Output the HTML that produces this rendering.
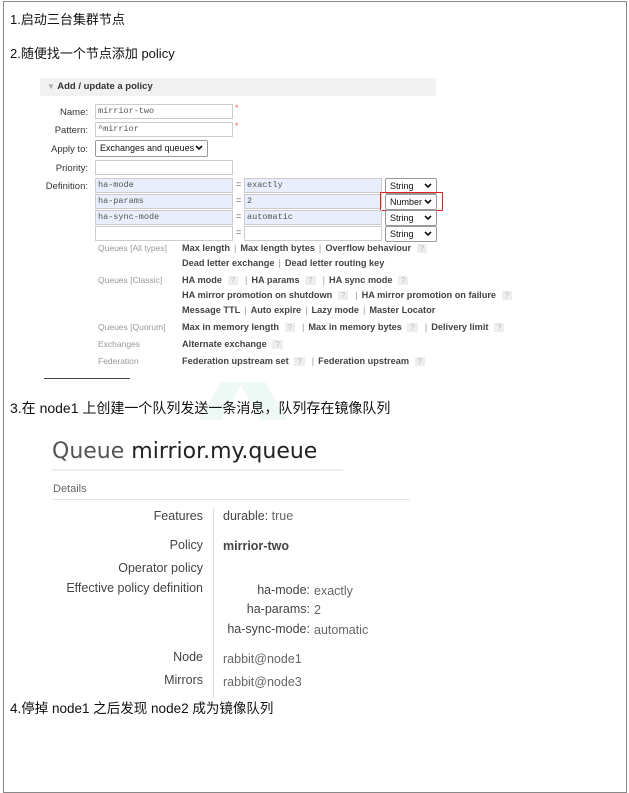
<!DOCTYPE html>
<html><head><meta charset="utf-8"><style>
body{margin:0;width:629px;height:744px;background:#fff;position:relative;overflow:hidden;font-family:"Liberation Sans","Noto Sans CJK SC",sans-serif;}
.a{position:absolute;white-space:nowrap;}
.cn{font-size:14px;color:#111;}
.lbl{font-size:9.5px;color:#333;text-align:right;width:80px;}
.inp{position:absolute;height:15px;border:1px solid #ccc;background:#fff;box-sizing:border-box;font-family:"Liberation Mono",monospace;font-size:8.5px;color:#555;padding-left:2px;line-height:13px;}
.blue{background:#e9eefc;}
.sel{position:absolute;height:16px;border:1px solid #999;border-radius:2px;background:#fff;box-sizing:border-box;font-size:9px;color:#111;padding-left:4px;line-height:14px;}
.sel svg{position:absolute;right:4px;top:4px;}
.g{font-size:8.5px;color:#999;}
.l{font-size:9.2px;color:#444;font-weight:bold;}
.q{display:inline-block;background:#eee;color:#bbb;font-size:8px;padding:0 3px;margin:0 3px;font-weight:normal;}
.s{color:#999;font-weight:normal;margin:0 4px;}
.dl{font-size:12.5px;color:#444;text-align:right;width:170px;}
.dv{font-size:12.5px;color:#666;}
</style></head><body>
<div class="a" style="left:3px;top:1px;width:622px;height:790px;border:1px solid #888;"></div>
<div class="a cn" style="left:10px;top:9px;font-size:13px;">1.启动三台集群节点</div>
<div class="a cn" style="left:10px;top:43px;font-size:13px;">2.随便找一个节点添加 policy</div>

<div class="a" style="left:40px;top:78px;width:396px;height:18px;background:#f1f1f1;"></div>
<div class="a" style="left:47px;top:81px;font-size:9.5px;color:#333;font-weight:bold;"><span style="color:#aaa;font-size:8px;">▼</span> Add / update a policy</div>

<div class="a lbl" style="left:8px;top:107px;">Name:</div>
<div class="inp" style="left:95px;top:104px;width:138px;">mirrior-two</div>
<div class="a" style="left:235px;top:103px;color:#e66;font-size:9px;">*</div>
<div class="a lbl" style="left:8px;top:125px;">Pattern:</div>
<div class="inp" style="left:95px;top:122px;width:138px;">^mirrior</div>
<div class="a" style="left:235px;top:121px;color:#e66;font-size:9px;">*</div>
<div class="a lbl" style="left:8px;top:144px;">Apply to:</div>
<div class="sel" style="left:95px;top:140px;width:113px;height:17px;">Exchanges and queues<svg width="8" height="6" viewBox="0 0 8 6"><path d="M1 1L4 4L7 1" stroke="#111" stroke-width="1.6" fill="none"/></svg></div>
<div class="a lbl" style="left:8px;top:163px;">Priority:</div>
<div class="inp" style="left:95px;top:160px;width:138px;"></div>
<div class="a lbl" style="left:8px;top:181px;">Definition:</div>

<div class="inp blue" style="left:95px;top:178px;width:138px;">ha-mode</div>
<div class="a" style="left:236px;top:179px;font-size:9px;color:#666;">=</div>
<div class="inp blue" style="left:244px;top:178px;width:138px;">exactly</div>
<div class="sel" style="left:385px;top:178px;width:52px;">String<svg width="8" height="6" viewBox="0 0 8 6"><path d="M1 1L4 4L7 1" stroke="#111" stroke-width="1.6" fill="none"/></svg></div>

<div class="inp blue" style="left:95px;top:194px;width:138px;">ha-params</div>
<div class="a" style="left:236px;top:195px;font-size:9px;color:#666;">=</div>
<div class="inp blue" style="left:244px;top:194px;width:138px;">2</div>
<div class="sel" style="left:385px;top:194px;width:52px;">Number<svg width="8" height="6" viewBox="0 0 8 6"><path d="M1 1L4 4L7 1" stroke="#111" stroke-width="1.6" fill="none"/></svg></div>
<div class="a" style="left:380px;top:192px;width:61px;height:17px;border:1.5px solid #e02020;"></div>

<div class="inp blue" style="left:95px;top:210px;width:138px;">ha-sync-mode</div>
<div class="a" style="left:236px;top:211px;font-size:9px;color:#666;">=</div>
<div class="inp blue" style="left:244px;top:210px;width:138px;">automatic</div>
<div class="sel" style="left:385px;top:210px;width:52px;">String<svg width="8" height="6" viewBox="0 0 8 6"><path d="M1 1L4 4L7 1" stroke="#111" stroke-width="1.6" fill="none"/></svg></div>

<div class="inp" style="left:95px;top:226px;width:138px;"></div>
<div class="a" style="left:236px;top:227px;font-size:9px;color:#666;">=</div>
<div class="inp" style="left:244px;top:226px;width:138px;"></div>
<div class="sel" style="left:385px;top:226px;width:52px;">String<svg width="8" height="6" viewBox="0 0 8 6"><path d="M1 1L4 4L7 1" stroke="#111" stroke-width="1.6" fill="none"/></svg></div>

<div class="a g" style="left:98px;top:243px;">Queues [All types]</div>
<div class="a l" style="left:182px;top:243px;">Max length<span class="s">|</span>Max length bytes<span class="s">|</span>Overflow behaviour <span class="q">?</span></div>
<div class="a l" style="left:182px;top:258px;">Dead letter exchange<span class="s">|</span>Dead letter routing key</div>
<div class="a g" style="left:98px;top:275px;">Queues [Classic]</div>
<div class="a l" style="left:182px;top:275px;">HA mode <span class="q">?</span><span class="s">|</span>HA params <span class="q">?</span><span class="s">|</span>HA sync mode <span class="q">?</span></div>
<div class="a l" style="left:182px;top:290px;">HA mirror promotion on shutdown <span class="q">?</span><span class="s">|</span>HA mirror promotion on failure <span class="q">?</span></div>
<div class="a l" style="left:182px;top:305px;">Message TTL<span class="s">|</span>Auto expire<span class="s">|</span>Lazy mode<span class="s">|</span>Master Locator</div>
<div class="a g" style="left:98px;top:322px;">Queues [Quorum]</div>
<div class="a l" style="left:182px;top:322px;">Max in memory length <span class="q">?</span><span class="s">|</span>Max in memory bytes <span class="q">?</span><span class="s">|</span>Delivery limit <span class="q">?</span></div>
<div class="a g" style="left:98px;top:339px;">Exchanges</div>
<div class="a l" style="left:182px;top:339px;">Alternate exchange <span class="q">?</span></div>
<div class="a g" style="left:98px;top:356px;">Federation</div>
<div class="a l" style="left:182px;top:356px;">Federation upstream set <span class="q">?</span><span class="s">|</span>Federation upstream <span class="q">?</span></div>
<div class="a" style="left:44px;top:378px;width:86px;height:1px;background:#444;"></div>

<div class="a" style="left:210px;top:382px;width:22px;height:38px;background:#eef8f5;transform:skewX(-30deg);"></div>
<div class="a" style="left:250px;top:382px;width:26px;height:38px;background:#eef8f5;transform:skewX(30deg);"></div>

<div class="a cn" style="left:10px;top:398px;">3.在 node1 上创建一个队列发送一条消息，队列存在镜像队列</div>

<div class="a" style="left:52px;top:439px;font-size:22px;color:#555;font-family:'DejaVu Sans',sans-serif;">Queue <span style="color:#222">mirrior.my.queue</span></div>
<div class="a" style="left:52px;top:469px;width:291px;height:2px;background:#eee;"></div>
<div class="a" style="left:53px;top:483px;font-size:11px;color:#666;">Details</div>
<div class="a" style="left:52px;top:499px;width:358px;height:1px;background:#e4e4e4;"></div>
<div class="a" style="left:213px;top:508px;width:1px;height:190px;background:#ddd;"></div>

<div class="a dl" style="left:33px;top:509px;">Features</div>
<div class="a" style="left:223px;top:509px;font-size:12.5px;color:#444;">durable: <span style="color:#666">true</span></div>
<div class="a dl" style="left:33px;top:538px;">Policy</div>
<div class="a" style="left:223px;top:539px;font-size:12.5px;color:#444;font-weight:bold;">mirrior-two</div>
<div class="a dl" style="left:33px;top:561px;">Operator policy</div>
<div class="a dl" style="left:33px;top:581px;">Effective policy definition</div>
<div class="a" style="left:190px;top:583px;width:120px;text-align:right;font-size:12.5px;color:#444;">ha-mode:</div>
<div class="a dv" style="left:314px;top:584px;">exactly</div>
<div class="a" style="left:190px;top:602px;width:120px;text-align:right;font-size:12.5px;color:#444;">ha-params:</div>
<div class="a dv" style="left:314px;top:603px;">2</div>
<div class="a" style="left:190px;top:622px;width:120px;text-align:right;font-size:12.5px;color:#444;">ha-sync-mode:</div>
<div class="a dv" style="left:314px;top:623px;">automatic</div>
<div class="a dl" style="left:33px;top:650px;">Node</div>
<div class="a dv" style="left:223px;top:652px;">rabbit@node1</div>
<div class="a dl" style="left:33px;top:673px;">Mirrors</div>
<div class="a dv" style="left:223px;top:675px;">rabbit@node3</div>

<div class="a cn" style="left:10px;top:697px;font-size:13.5px;">4.停掉 node1 之后发现 node2 成为镜像队列</div>
</body></html>
